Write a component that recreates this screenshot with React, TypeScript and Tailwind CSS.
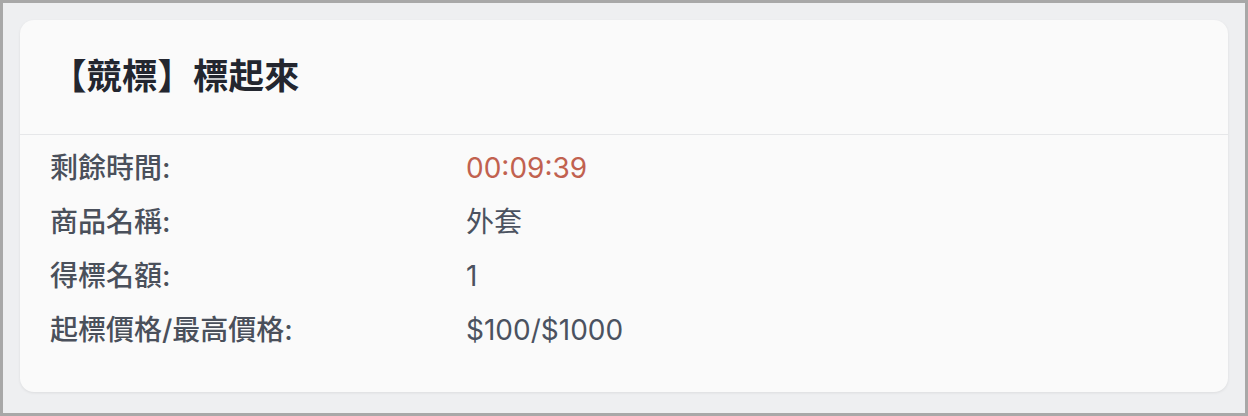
const rows: { label: string; value: string; accent?: boolean }[] = [
  { label: "剩餘時間:", value: "00:09:39", accent: true },
  { label: "商品名稱:", value: "外套" },
  { label: "得標名額:", value: "1" },
  { label: "起標價格/最高價格:", value: "$100/$1000" },
];

export default function App() {
  return (
    <div
      className="h-[416px] w-full border-[3px] border-[#a8a8a8] bg-[#eeeff1] p-[17px]"
      style={{ fontFamily: '"Inter", "Noto Sans CJK TC", sans-serif' }}
    >
      <div className="h-[372px] rounded-[14px] bg-[#fafafa] shadow-[0_1px_3px_rgba(0,0,0,0.08)]">
        <div className="flex h-[115px] items-center border-b border-[#e6e7e9] px-[31px]">
          <h1 className="text-[35.5px] leading-[54px] font-bold text-[#23262f]">
            【競標】標起來
          </h1>
        </div>
        <div className="flex flex-col gap-[12px] px-[30px] pt-[12px]">
          {rows.map((row) => (
            <div key={row.label} className="flex text-[28px] leading-[42px]">
              <div className="w-[416px] font-medium text-[#4a505b]">{row.label}</div>
              <div className={row.accent ? "text-[#c1614f]" : "text-[#4b5260]"}>
                {row.value}
              </div>
            </div>
          ))}
        </div>
      </div>
    </div>
  );
}
